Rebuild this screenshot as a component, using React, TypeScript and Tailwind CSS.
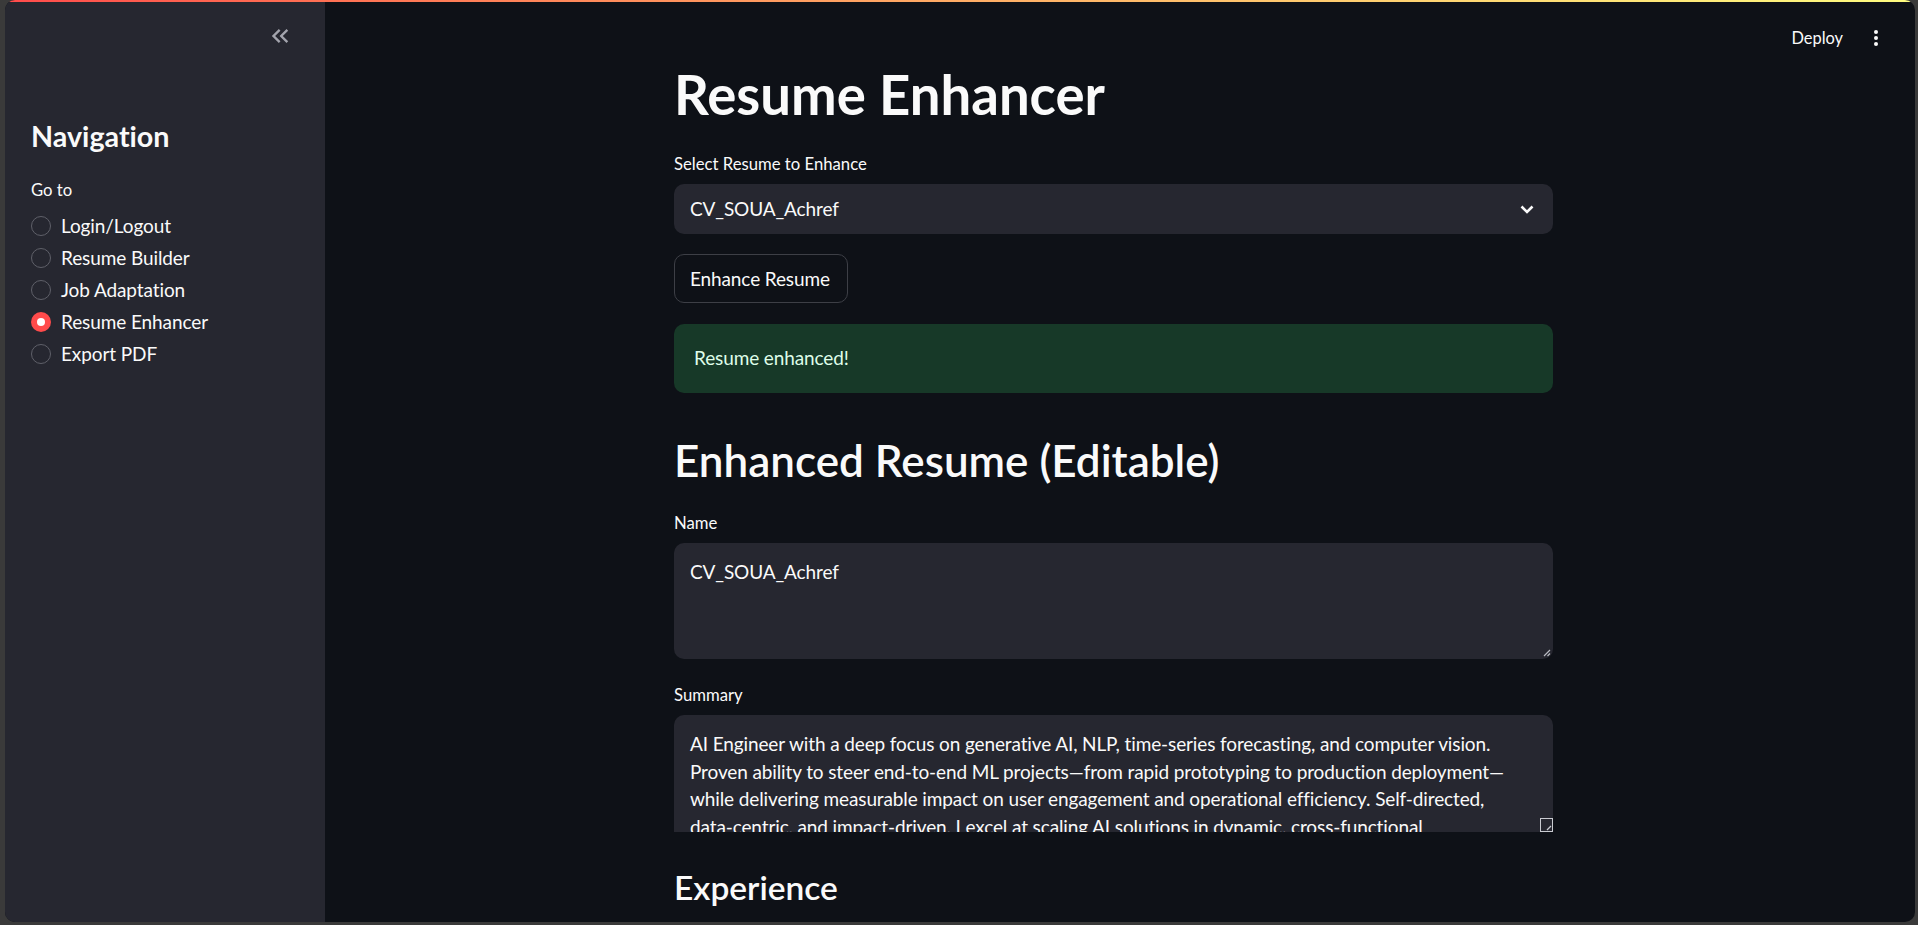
import React from "react";

const pages = ["Login/Logout", "Resume Builder", "Job Adaptation", "Resume Enhancer", "Export PDF"];

const summaryLines = [
  "AI Engineer with a deep focus on generative AI, NLP, time-series forecasting, and computer vision.",
  "Proven ability to steer end-to-end ML projects\u2014from rapid prototyping to production deployment\u2014",
  "while delivering measurable impact on user engagement and operational efficiency. Self-directed,",
  "data-centric, and impact-driven, I excel at scaling AI solutions in dynamic, cross-functional",
];

const Radio = ({ label, active }: { label: string; active: boolean }) => (
  <div className="h-[32px] flex items-center">
    {active ? (
      <span className="w-[20px] h-[20px] rounded-full bg-[#ff4b4b] flex items-center justify-center">
        <span className="w-[8px] h-[8px] rounded-full bg-white" />
      </span>
    ) : (
      <span className="w-[20px] h-[20px] rounded-full border border-[#5f6069]" />
    )}
    <span className="ml-[10px] text-[19px] tracking-[-0.1px] leading-[32px]">{label}</span>
  </div>
);

const Sidebar = () => (
  <aside className="w-[320px] shrink-0 bg-[#262730] flex flex-col pl-[26px]">
    <div className="h-[68px] flex items-center justify-end pr-[31px]">
      <svg width="28" height="28" viewBox="0 0 24 24" fill="#a3a4ad">
        <path d="M17.59 18L19 16.59 14.42 12 19 7.41 17.59 6l-6 6z" />
        <path d="M11 18l1.41-1.41L7.83 12l4.58-4.59L11 6l-6 6z" />
      </svg>
    </div>
    <h2 className="mt-[48px] text-[28.7px] leading-[36px] font-bold">Navigation</h2>
    <p className="mt-[22px] text-[16.7px] leading-[28px]">Go to</p>
    <div className="mt-[6px] flex flex-col">
      {pages.map((p) => (
        <Radio key={p} label={p} active={p === "Resume Enhancer"} />
      ))}
    </div>
  </aside>
);

const Label = ({ children, className = "" }: { children: React.ReactNode; className?: string }) => (
  <p className={`text-[16.7px] leading-[28px] ${className}`}>{children}</p>
);

export default function App() {
  return (
    <div className="w-[1918px] h-[925px] bg-[#3a3a3a] pl-[5px] pr-[3px] pb-[3px] font-[Lato,sans-serif] [font-variant-ligatures:none] text-[#fafafa]">
      <div className="h-full rounded-[10px] overflow-hidden bg-[#0e1117] flex flex-col">
        <div className="h-[2px] shrink-0 bg-linear-to-r from-[#ff4b4b] to-[#fffd80]" />
        <div className="flex flex-1 min-h-0">
          <Sidebar />
          <main className="relative flex-1 overflow-hidden">
            {/* header */}
            <div className="absolute top-[26px] right-[37px] h-[20px] flex items-center">
              <span className="text-[16.4px]">Deploy</span>
              <svg className="ml-[31px]" width="4" height="16" viewBox="0 0 4 16" fill="#fafafa">
                <circle cx="2" cy="2" r="2" />
                <circle cx="2" cy="8" r="2" />
                <circle cx="2" cy="14" r="2" />
              </svg>
            </div>

            <div className="pl-[349px] pt-[59px]">
              <div className="w-[879px] flex flex-col">
                <h1 className="text-[54.5px] leading-[66px] font-bold">Resume Enhancer</h1>

                <Label className="mt-[23px]">Select Resume to Enhance</Label>
                <div className="mt-[6px] h-[50px] rounded-[10px] bg-[#262730] flex items-center justify-between pl-[16px] pr-[19px]">
                  <span className="text-[19px] tracking-[-0.12px] leading-[28px]">CV_SOUA_Achref</span>
                  <svg width="14" height="9" viewBox="0 0 14 9" fill="none" stroke="#fafafa" strokeWidth="2.6">
                    <path d="M1.5 1.5l5.5 5.5 5.5-5.5" />
                  </svg>
                </div>

                <button className="mt-[20px] h-[49px] w-[174px] rounded-[10px] border border-[#3d3f46] text-[19px] tracking-[-0.12px] leading-[28px] text-left pl-[15px]">
                  Enhance Resume
                </button>

                <div className="mt-[21px] h-[69px] rounded-[10px] bg-[#173928] flex items-center px-[20px]">
                  <span className="text-[19px] tracking-[-0.12px] text-[#dffde9]">Resume enhanced!</span>
                </div>

                <h2 className="mt-[40px] text-[44px] leading-[54px] font-semibold">Enhanced Resume (Editable)</h2>

                <Label className="mt-[22px]">Name</Label>
                <div className="relative mt-[6px] h-[116px] rounded-[10px] bg-[#262730] pl-[16px] pt-[15px]">
                  <p className="text-[19px] tracking-[-0.12px] leading-[27.5px]">CV_SOUA_Achref</p>
                  <svg className="absolute right-[2px] bottom-[2px]" width="9" height="9" viewBox="0 0 9 9" stroke="#b9bbc2" strokeWidth="1.2">
                    <path d="M8 2L2 8M8 5.5L5.5 8" />
                  </svg>
                </div>

                <Label className="mt-[22px]">Summary</Label>
                <div className="relative mt-[6px] h-[117px] rounded-t-[10px] bg-[#262730] pl-[16px] pt-[15px] overflow-hidden">
                  {summaryLines.map((l) => (
                    <p key={l} className="text-[19px] tracking-[-0.12px] leading-[27.5px] whitespace-nowrap">
                      {l}
                    </p>
                  ))}
                  <div className="absolute right-0 bottom-0 w-[13px] h-[14px] border border-[#c9cbd1] bg-[#262730]">
                    <svg className="absolute right-0 bottom-0" width="7" height="7" viewBox="0 0 7 7" stroke="#c9cbd1" strokeWidth="1.2">
                      <path d="M6 2L2 6" />
                    </svg>
                  </div>
                </div>

                <h3 className="mt-[34px] text-[33.5px] leading-[42px] font-semibold">Experience</h3>
              </div>
            </div>
          </main>
        </div>
      </div>
    </div>
  );
}
